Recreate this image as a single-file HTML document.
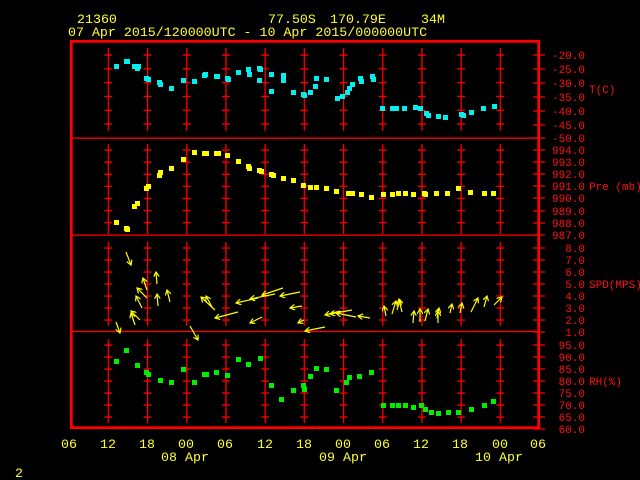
<!DOCTYPE html>
<html><head><meta charset="utf-8"><style>
html,body{margin:0;padding:0;background:#000;width:640px;height:480px;overflow:hidden}
svg{display:block}
.h{font-family:"Liberation Mono",monospace;font-size:13.3px;fill:#ffff30}
.r{font-family:"Liberation Mono",monospace;font-size:11px;fill:#ff1010}
</style></head><body>
<svg width="640" height="480" viewBox="0 0 640 480" xmlns="http://www.w3.org/2000/svg">
<defs>
<pattern id="p1" patternUnits="userSpaceOnUse" x="104.3" y="48.1" width="39.2" height="13.8"><rect x="0" y="6.3" width="8" height="1.3" fill="#f00"/><rect x="3.4" y="0" width="1.3" height="13.8" fill="#f00"/></pattern>
<pattern id="p2" patternUnits="userSpaceOnUse" x="104.3" y="144" width="39.2" height="12.1"><rect x="0" y="5.4" width="8" height="1.3" fill="#f00"/><rect x="3.4" y="0" width="1.3" height="12.1" fill="#f00"/></pattern>
<pattern id="p3" patternUnits="userSpaceOnUse" x="104.3" y="242" width="39.2" height="12"><rect x="0" y="5.4" width="8" height="1.3" fill="#f00"/><rect x="3.4" y="0" width="1.3" height="12" fill="#f00"/></pattern>
<pattern id="p4" patternUnits="userSpaceOnUse" x="104.3" y="339" width="39.2" height="12"><rect x="0" y="5.4" width="8" height="1.3" fill="#f00"/><rect x="3.4" y="0" width="1.3" height="12" fill="#f00"/></pattern>
<marker id="ah" markerWidth="6" markerHeight="6" refX="5" refY="3" orient="auto" markerUnits="userSpaceOnUse"><path d="M0,0 L5,3 L0,6" fill="none" stroke="#ff0" stroke-width="1.2"/></marker>
</defs>
<text class="h" x="77" y="23">21360</text>
<text class="h" x="268" y="23">77.50S</text>
<text class="h" x="330" y="23">170.79E</text>
<text class="h" x="421" y="23">34M</text>
<text class="h" x="68" y="36">07 Apr 2015/120000UTC - 10 Apr 2015/000000UTC</text>

<rect x="100" y="48.1" width="410" height="82.8" fill="url(#p1)"/>
<rect x="100" y="144" width="410" height="90" fill="url(#p2)"/>
<rect x="100" y="242" width="410" height="84" fill="url(#p3)"/>
<rect x="100" y="339" width="410" height="84" fill="url(#p4)"/>
<g fill="#f00">
<rect x="72" y="137.5" width="466" height="1.3"/>
<rect x="72" y="234.5" width="466" height="1.3"/>
<rect x="72" y="330.8" width="466" height="1.3"/>
</g>
<rect x="71.3" y="41.3" width="467.4" height="386.4" fill="none" stroke="#f00" stroke-width="2.8"/>
<path stroke="#f00" stroke-width="1.2" d="M533 55h12M533 69h12M533 83h12M533 97h12M533 111h12M533 125h12M533 138h12M533 150h12M533 162h12M533 174h12M533 186h12M533 198h12M533 211h12M533 223h12M533 235h12M533 248h12M533 260h12M533 272h12M533 284h12M533 296h12M533 308h12M533 320h12M533 332h12M533 345h12M533 357h12M533 369h12M533 381h12M533 393h12M533 405h12M533 417h12M533 429h12"/>

<g class="r" text-anchor="end">
<text x="585" y="59">-20.0</text><text x="585" y="73">-25.0</text><text x="585" y="87">-30.0</text><text x="585" y="101">-35.0</text><text x="585" y="115">-40.0</text><text x="585" y="129">-45.0</text><text x="585" y="142">-50.0</text>
<text x="585" y="154">994.0</text><text x="585" y="166">993.0</text><text x="585" y="178">992.0</text><text x="585" y="190">991.0</text><text x="585" y="202">990.0</text><text x="585" y="215">989.0</text><text x="585" y="227">988.0</text><text x="585" y="239">987.0</text>
<text x="585" y="252">8.0</text><text x="585" y="264">7.0</text><text x="585" y="276">6.0</text><text x="585" y="288">5.0</text><text x="585" y="300">4.0</text><text x="585" y="312">3.0</text><text x="585" y="324">2.0</text><text x="585" y="336">1.0</text>
<text x="585" y="349">95.0</text><text x="585" y="361">90.0</text><text x="585" y="373">85.0</text><text x="585" y="385">80.0</text><text x="585" y="397">75.0</text><text x="585" y="409">70.0</text><text x="585" y="421">65.0</text><text x="585" y="433">60.0</text>
</g>
<g class="r"><text x="589" y="93">T(C)</text><text x="589" y="190">Pre (mb)</text><text x="589" y="288">SPD(MPS)</text><text x="589" y="385">RH(%)</text></g>

<g class="h" text-anchor="middle">
<text x="69" y="448">06</text><text x="108" y="448">12</text><text x="147" y="448">18</text><text x="186" y="448">00</text><text x="225" y="448">06</text><text x="265" y="448">12</text><text x="304" y="448">18</text><text x="343" y="448">00</text><text x="382" y="448">06</text><text x="421" y="448">12</text><text x="460" y="448">18</text><text x="500" y="448">00</text><text x="538" y="448">06</text>
<text x="185" y="461">08 Apr</text><text x="343" y="461">09 Apr</text><text x="499" y="461">10 Apr</text>
</g>
<text class="h" x="15" y="477">2</text>

<g fill="#00f0f0">
<rect x="114" y="64" width="5" height="5"/><rect x="124" y="59" width="5" height="5"/><rect x="125" y="59" width="5" height="5"/><rect x="132" y="64" width="5" height="5"/><rect x="135" y="66" width="5" height="5"/><rect x="136" y="64" width="5" height="5"/><rect x="144" y="76" width="5" height="5"/><rect x="146" y="77" width="5" height="5"/><rect x="157" y="80" width="5" height="5"/><rect x="158" y="82" width="5" height="5"/><rect x="169" y="86" width="5" height="5"/><rect x="181" y="78" width="5" height="5"/><rect x="192" y="79" width="5" height="5"/><rect x="202" y="73" width="5" height="5"/><rect x="203" y="72" width="5" height="5"/><rect x="214" y="74" width="5" height="5"/><rect x="215" y="74" width="5" height="5"/><rect x="225" y="76" width="5" height="5"/><rect x="226" y="77" width="5" height="5"/><rect x="236" y="70" width="5" height="5"/><rect x="246" y="67" width="5" height="5"/><rect x="247" y="72" width="5" height="5"/><rect x="257" y="66" width="5" height="5"/><rect x="258" y="67" width="5" height="5"/><rect x="257" y="78" width="5" height="5"/><rect x="269" y="72" width="5" height="5"/><rect x="269" y="89" width="5" height="5"/><rect x="281" y="78" width="5" height="5"/><rect x="281" y="73" width="5" height="5"/><rect x="291" y="90" width="5" height="5"/><rect x="301" y="92" width="5" height="5"/><rect x="302" y="93" width="5" height="5"/><rect x="308" y="90" width="5" height="5"/><rect x="313" y="84" width="5" height="5"/><rect x="314" y="76" width="5" height="5"/><rect x="324" y="77" width="5" height="5"/><rect x="335" y="96" width="5" height="5"/><rect x="340" y="94" width="5" height="5"/><rect x="345" y="90" width="5" height="5"/><rect x="347" y="86" width="5" height="5"/><rect x="350" y="82" width="5" height="5"/><rect x="358" y="76" width="5" height="5"/><rect x="359" y="79" width="5" height="5"/><rect x="370" y="74" width="5" height="5"/><rect x="371" y="77" width="5" height="5"/><rect x="380" y="106" width="5" height="5"/><rect x="390" y="106" width="5" height="5"/><rect x="394" y="106" width="5" height="5"/><rect x="402" y="106" width="5" height="5"/><rect x="413" y="105" width="5" height="5"/><rect x="418" y="106" width="5" height="5"/><rect x="424" y="111" width="5" height="5"/><rect x="426" y="113" width="5" height="5"/><rect x="436" y="114" width="5" height="5"/><rect x="443" y="115" width="5" height="5"/><rect x="459" y="112" width="5" height="5"/><rect x="461" y="113" width="5" height="5"/><rect x="469" y="110" width="5" height="5"/><rect x="481" y="106" width="5" height="5"/><rect x="492" y="104" width="5" height="5"/>
</g>
<g fill="#ffff00">
<rect x="114" y="220" width="5" height="5"/><rect x="124" y="226" width="5" height="5"/><rect x="125" y="227" width="5" height="5"/><rect x="132" y="204" width="5" height="5"/><rect x="135" y="201" width="5" height="5"/><rect x="144" y="186" width="5" height="5"/><rect x="146" y="184" width="5" height="5"/><rect x="157" y="173" width="5" height="5"/><rect x="158" y="170" width="5" height="5"/><rect x="169" y="166" width="5" height="5"/><rect x="181" y="157" width="5" height="5"/><rect x="192" y="150" width="5" height="5"/><rect x="202" y="151" width="5" height="5"/><rect x="204" y="151" width="5" height="5"/><rect x="214" y="151" width="5" height="5"/><rect x="216" y="151" width="5" height="5"/><rect x="225" y="153" width="5" height="5"/><rect x="236" y="159" width="5" height="5"/><rect x="246" y="164" width="5" height="5"/><rect x="247" y="166" width="5" height="5"/><rect x="257" y="168" width="5" height="5"/><rect x="259" y="169" width="5" height="5"/><rect x="269" y="172" width="5" height="5"/><rect x="271" y="173" width="5" height="5"/><rect x="281" y="176" width="5" height="5"/><rect x="291" y="178" width="5" height="5"/><rect x="301" y="183" width="5" height="5"/><rect x="308" y="185" width="5" height="5"/><rect x="314" y="185" width="5" height="5"/><rect x="324" y="186" width="5" height="5"/><rect x="334" y="189" width="5" height="5"/><rect x="346" y="191" width="5" height="5"/><rect x="350" y="191" width="5" height="5"/><rect x="359" y="192" width="5" height="5"/><rect x="369" y="195" width="5" height="5"/><rect x="381" y="192" width="5" height="5"/><rect x="390" y="192" width="5" height="5"/><rect x="396" y="191" width="5" height="5"/><rect x="403" y="191" width="5" height="5"/><rect x="411" y="192" width="5" height="5"/><rect x="422" y="191" width="5" height="5"/><rect x="423" y="192" width="5" height="5"/><rect x="434" y="191" width="5" height="5"/><rect x="445" y="191" width="5" height="5"/><rect x="456" y="186" width="5" height="5"/><rect x="468" y="190" width="5" height="5"/><rect x="482" y="191" width="5" height="5"/><rect x="491" y="191" width="5" height="5"/>
</g>
<g fill="#00ee00">
<rect x="114" y="359" width="5" height="5"/><rect x="124" y="348" width="5" height="5"/><rect x="135" y="363" width="5" height="5"/><rect x="144" y="370" width="5" height="5"/><rect x="146" y="372" width="5" height="5"/><rect x="158" y="378" width="5" height="5"/><rect x="169" y="380" width="5" height="5"/><rect x="181" y="367" width="5" height="5"/><rect x="192" y="380" width="5" height="5"/><rect x="202" y="372" width="5" height="5"/><rect x="204" y="372" width="5" height="5"/><rect x="214" y="370" width="5" height="5"/><rect x="225" y="373" width="5" height="5"/><rect x="236" y="357" width="5" height="5"/><rect x="246" y="362" width="5" height="5"/><rect x="258" y="356" width="5" height="5"/><rect x="269" y="383" width="5" height="5"/><rect x="279" y="397" width="5" height="5"/><rect x="291" y="388" width="5" height="5"/><rect x="301" y="383" width="5" height="5"/><rect x="302" y="387" width="5" height="5"/><rect x="308" y="374" width="5" height="5"/><rect x="314" y="366" width="5" height="5"/><rect x="324" y="367" width="5" height="5"/><rect x="334" y="388" width="5" height="5"/><rect x="344" y="380" width="5" height="5"/><rect x="347" y="375" width="5" height="5"/><rect x="357" y="374" width="5" height="5"/><rect x="369" y="370" width="5" height="5"/><rect x="381" y="403" width="5" height="5"/><rect x="390" y="403" width="5" height="5"/><rect x="396" y="403" width="5" height="5"/><rect x="403" y="403" width="5" height="5"/><rect x="411" y="405" width="5" height="5"/><rect x="419" y="403" width="5" height="5"/><rect x="423" y="407" width="5" height="5"/><rect x="429" y="410" width="5" height="5"/><rect x="436" y="411" width="5" height="5"/><rect x="446" y="410" width="5" height="5"/><rect x="456" y="410" width="5" height="5"/><rect x="469" y="407" width="5" height="5"/><rect x="482" y="403" width="5" height="5"/><rect x="491" y="399" width="5" height="5"/>
</g>
<g stroke="#ff0" stroke-width="1.2" fill="none" marker-end="url(#ah)">
<path d="M126 252L131 265"/><path d="M157 284L156 272"/><path d="M147 290L143 278"/><path d="M147 298L137 288"/><path d="M158 306L157 294"/><path d="M170 302L167 290"/><path d="M142 308L136 296"/><path d="M135 325L131 313"/><path d="M140 320L131 311"/><path d="M116 322L120 333"/><path d="M190 326L198 340"/>
<path d="M215 310L201 297"/><path d="M212 307L206 296"/><path d="M238 312L215 318"/><path d="M258 298L236 303"/><path d="M275 294L250 299"/><path d="M283 288L262 295"/><path d="M300 292L280 296"/><path d="M302 306L290 308"/><path d="M262 317L250 323"/><path d="M304 320L298 323"/><path d="M325 327L305 331"/><path d="M340 311L325 315"/><path d="M352 310L330 314"/><path d="M356 317L336 313"/><path d="M370 318L358 316"/>
<path d="M386 316L384 306"/><path d="M392 314L396 301"/><path d="M397 310L400 300"/><path d="M402 312L399 299"/><path d="M413 323L414 311"/><path d="M420 322L420 309"/><path d="M425 321L428 309"/><path d="M437 318L439 308"/><path d="M438 323L438 311"/><path d="M450 313L452 304"/><path d="M460 313L462 303"/><path d="M471 312L478 298"/><path d="M484 307L487 296"/><path d="M494 305L502 297"/>
</g>
</svg>
</body></html>
